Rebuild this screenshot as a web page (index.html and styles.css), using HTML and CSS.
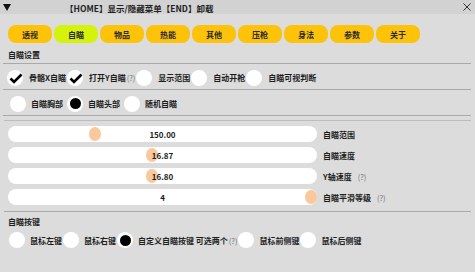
FILE: index.html
```html
<!DOCTYPE html>
<html lang="zh">
<head>
<meta charset="utf-8">
<link rel="stylesheet" href="styles.css">
</head>
<body>
<div class="win">
  <div class="titlebar">
    <svg class="tri" width="8" height="7" viewBox="0 0 8 7"><polygon points="0,0 8,0 4,7" fill="#111"/></svg>
    <span class="title">【HOME】显示/隐藏菜单【END】卸载</span>
    <svg class="close" width="8" height="8" viewBox="0 0 8 8"><path d="M0.5 0.5 L7.5 7.5 M7.5 0.5 L0.5 7.5" stroke="#333" stroke-width="1"/></svg>
  </div>

  <div class="tabs">
    <div class="tab">透视</div>
    <div class="tab active">自瞄</div>
    <div class="tab">物品</div>
    <div class="tab">热能</div>
    <div class="tab">其他</div>
    <div class="tab">压枪</div>
    <div class="tab">身法</div>
    <div class="tab">参数</div>
    <div class="tab">关于</div>
  </div>

  <div class="heading h1">自瞄设置</div>
  <div class="sep first"></div>

  <div class="row">
    <div class="item"><span class="box checked"><svg width="14" height="11" viewBox="0 0 14 11"><path d="M1.5 5.5 L5 9 L12.5 1.5" fill="none" stroke="#000" stroke-width="2.6"/></svg></span><span class="lbl">骨骼X自瞄</span></div>
    <div class="item"><span class="box checked"><svg width="14" height="11" viewBox="0 0 14 11"><path d="M1.5 5.5 L5 9 L12.5 1.5" fill="none" stroke="#000" stroke-width="2.6"/></svg></span><span class="lbl">打开Y自瞄</span><span class="q">(?)</span></div>
    <div class="item"><span class="box"></span><span class="lbl">显示范围</span></div>
    <div class="item"><span class="box"></span><span class="lbl">自动开枪</span></div>
    <div class="item"><span class="box"></span><span class="lbl">自瞄可视判断</span></div>
  </div>
  <div class="sep"></div>

  <div class="row rrow">
    <div class="item"><span class="radio"></span><span class="lbl">自瞄胸部</span></div>
    <div class="item"><span class="radio on"></span><span class="lbl">自瞄头部</span></div>
    <div class="item"><span class="radio"></span><span class="lbl">随机自瞄</span></div>
  </div>
  <div class="sep"></div>

  <div class="sliders">
    <div class="srow">
      <div class="track"><span class="knob" style="left:81px"></span><span class="val">150.00</span></div>
      <span class="slbl">自瞄范围</span>
    </div>
    <div class="srow">
      <div class="track"><span class="knob" style="left:138px"></span><span class="val">16.87</span></div>
      <span class="slbl">自瞄速度</span>
    </div>
    <div class="srow">
      <div class="track"><span class="knob" style="left:138px"></span><span class="val">16.80</span></div>
      <span class="slbl">Y轴速度</span><span class="q sq">(?)</span>
    </div>
    <div class="srow">
      <div class="track"><span class="knob" style="left:297px"></span><span class="val">4</span></div>
      <span class="slbl">自瞄平滑等级</span><span class="q sq">(?)</span>
    </div>
  </div>

  <div class="heading h2">自瞄按键</div>
  <div class="row brow">
    <div class="item"><span class="radio"></span><span class="lbl">鼠标左键</span></div>
    <div class="item"><span class="radio"></span><span class="lbl">鼠标右键</span></div>
    <div class="item"><span class="radio on"></span><span class="lbl">自定义自瞄按键 可选两个</span><span class="q">(?)</span></div>
    <div class="item"><span class="radio"></span><span class="lbl">鼠标前侧键</span></div>
    <div class="item"><span class="radio"></span><span class="lbl">鼠标后侧键</span></div>
  </div>
</div>
</body>
</html>
```

FILE: styles.css
```css
html, body {
  margin: 0;
  padding: 0;
}
body {
  width: 475px;
  height: 272px;
  overflow: hidden;
  background: #dcdcdc;
  font-family: "Noto Sans CJK SC", "Noto Sans", sans-serif;
  font-weight: 700;
  font-size: 8px;
  color: #1e1e1e;
}
.win {
  width: 475px;
  height: 272px;
  display: flex;
  flex-direction: column;
}
.titlebar {
  height: 14px;
  background: #d2d2d2;
  display: flex;
  align-items: center;
  padding: 0 4px 0 3px;
}
.tri {
  margin-top: 1px;
}
.title {
  margin-left: 54px;
  font-size: 8.5px;
  line-height: 14px;
  margin-top: 2px;
  color: #222;
}
.close {
  margin-left: auto;
}
.tabs {
  display: flex;
  gap: 2px;
  padding: 11px 0 0 8px;
}
.tab {
  width: 44px;
  height: 18px;
  border-radius: 8px;
  background: #fdc20a;
  display: flex;
  align-items: center;
  justify-content: center;
  font-size: 8px;
  color: #2a2a2a;
}
.tab.active {
  background: #d4f20c;
}
.heading {
  padding-left: 8px;
  height: 12px;
  line-height: 12px;
}
.h1 {
  margin-top: 6px;
}
.sep {
  height: 1px;
  background: #a9a9a9;
  margin: 0 4px 0 3px;
}
.sep.first {
  margin-top: 2px;
}
.row {
  display: flex;
  align-items: center;
  height: 25px;
  padding-left: 7px;
  gap: 1px;
}
.row .item {
  margin-top: 2px;
}
.rrow {
  padding-left: 10px;
  gap: 4px;
}
.item {
  display: flex;
  align-items: center;
}
.box, .radio {
  width: 16px;
  height: 16px;
  border-radius: 50%;
  background: #fff;
  flex: none;
  position: relative;
}
.box svg {
  position: absolute;
  left: 2px;
  top: 3px;
}
.radio.on::after {
  content: "";
  position: absolute;
  left: 2.5px;
  top: 2.5px;
  width: 11px;
  height: 11px;
  border-radius: 50%;
  background: #000;
}
.lbl {
  margin-left: 6px;
  white-space: nowrap;
}
.rrow .lbl {
  margin-left: 5px;
}
.q {
  font-weight: 400;
  color: #777;
  font-size: 7.5px;
  margin-left: 1px;
}
.sliders {
  margin: 4px 4px 0 4px;
  border-top: 1px solid #bdbdbd;
  border-bottom: 1px solid #a9a9a9;
  padding: 5px 0 6px 4px;
  display: flex;
  flex-direction: column;
  gap: 5px;
}
.srow {
  display: flex;
  align-items: center;
  height: 16px;
}
.track {
  width: 309px;
  height: 16px;
  border-radius: 8px;
  background: #fff;
  position: relative;
  display: flex;
  align-items: center;
  justify-content: center;
  flex: none;
}
.knob {
  position: absolute;
  top: 1px;
  width: 12px;
  height: 14px;
  border-radius: 50%;
  background: #f9c89c;
}
.val {
  position: relative;
  font-size: 8px;
}
.slbl {
  margin-left: 6px;
}
.sq {
  margin-left: 6px;
}
.h2 {
  margin-top: 4px;
}
.brow {
  height: 24px;
  padding-left: 9px;
  gap: 1px;
}
.brow .item {
  margin-top: 0;
}
.brow .lbl {
  margin-left: 5px;
}
```
